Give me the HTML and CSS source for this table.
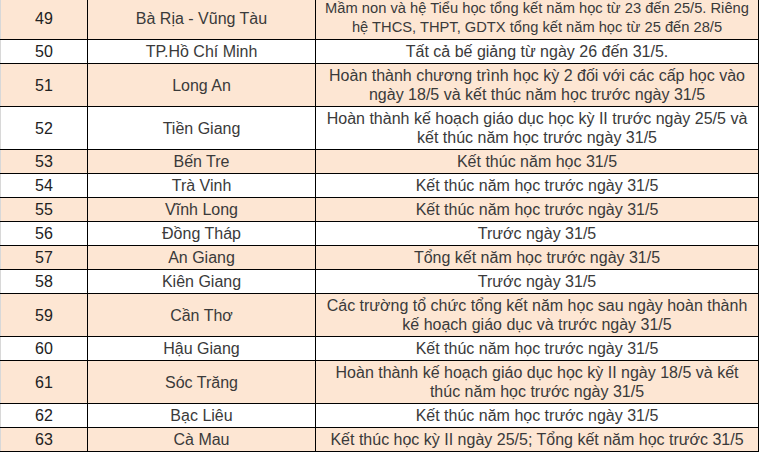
FILE: index.html
```html
<!DOCTYPE html>
<html lang="vi">
<head>
<meta charset="utf-8">
<title>Lịch kết thúc năm học</title>
<link rel="stylesheet" href="styles.css">
</head>
<body>
<table class="schedule">
<colgroup><col class="c-num"><col class="c-prov"><col class="c-note"></colgroup>
<tbody>
<tr class="alt"><td>49</td><td>Bà Rịa - Vũng Tàu</td><td class="tight">Mầm non và hệ Tiểu học tổng kết năm học từ 23 đến 25/5. Riêng hệ THCS, THPT, GDTX tổng kết năm học từ 25 đến 28/5</td></tr>
<tr><td>50</td><td>TP.Hồ Chí Minh</td><td>Tất cả bế giảng từ ngày 26 đến 31/5.</td></tr>
<tr class="alt"><td>51</td><td>Long An</td><td>Hoàn thành chương trình học kỳ 2 đối với các cấp học vào ngày 18/5 và kết thúc năm học trước ngày 31/5</td></tr>
<tr><td>52</td><td>Tiền Giang</td><td>Hoàn thành kế hoạch giáo dục học kỳ II trước ngày 25/5 và kết thúc năm học trước ngày 31/5</td></tr>
<tr class="alt"><td>53</td><td>Bến Tre</td><td>Kết thúc năm học 31/5</td></tr>
<tr><td>54</td><td>Trà Vinh</td><td>Kết thúc năm học trước ngày 31/5</td></tr>
<tr class="alt"><td>55</td><td>Vĩnh Long</td><td>Kết thúc năm học trước ngày 31/5</td></tr>
<tr><td>56</td><td>Đồng Tháp</td><td>Trước ngày 31/5</td></tr>
<tr class="alt"><td>57</td><td>An Giang</td><td>Tổng kết năm học trước ngày 31/5</td></tr>
<tr><td>58</td><td>Kiên Giang</td><td>Trước ngày 31/5</td></tr>
<tr class="alt"><td>59</td><td>Cần Thơ</td><td>Các trường tổ chức tổng kết năm học sau ngày hoàn thành kế hoạch giáo dục và trước ngày 31/5</td></tr>
<tr><td>60</td><td>Hậu Giang</td><td>Kết thúc năm học trước ngày 31/5</td></tr>
<tr class="alt"><td>61</td><td>Sóc Trăng</td><td>Hoàn thành kế hoạch giáo dục học kỳ II ngày 18/5 và kết thúc năm học trước ngày 31/5</td></tr>
<tr><td>62</td><td>Bạc Liêu</td><td>Kết thúc năm học trước ngày 31/5</td></tr>
<tr class="alt"><td>63</td><td>Cà Mau</td><td>Kết thúc học kỳ II ngày 25/5; Tổng kết năm học trước 31/5</td></tr>
</tbody>
</table>
</body>
</html>
```
FILE: styles.css
```css
html, body {
  margin: 0;
  padding: 0;
  background: #ffffff;
}
body {
  font-family: "Liberation Sans", Arial, sans-serif;
  font-size: 16px;
  color: #3a3a3a;
}
.schedule {
  border-collapse: collapse;
  width: 759px;
  margin-top: -4px;
  table-layout: fixed;
  border-left: 1px solid #d8d8d8;
}
.c-num { width: 87px; }
.c-prov { width: 228px; }
.c-note { width: 443px; }
.schedule td {
  border: 1px solid #000000;
  padding: 2px 4px;
  line-height: 19px;
  text-align: center;
  vertical-align: middle;
}
.schedule td:first-child {
  border-left: 1px solid #d8d8d8;
  color: #222222;
}
.schedule td.tight {
  font-size: 14.7px;
  line-height: 19px;
}
.schedule tr.alt td {
  background: #fde6d3;
}
```
